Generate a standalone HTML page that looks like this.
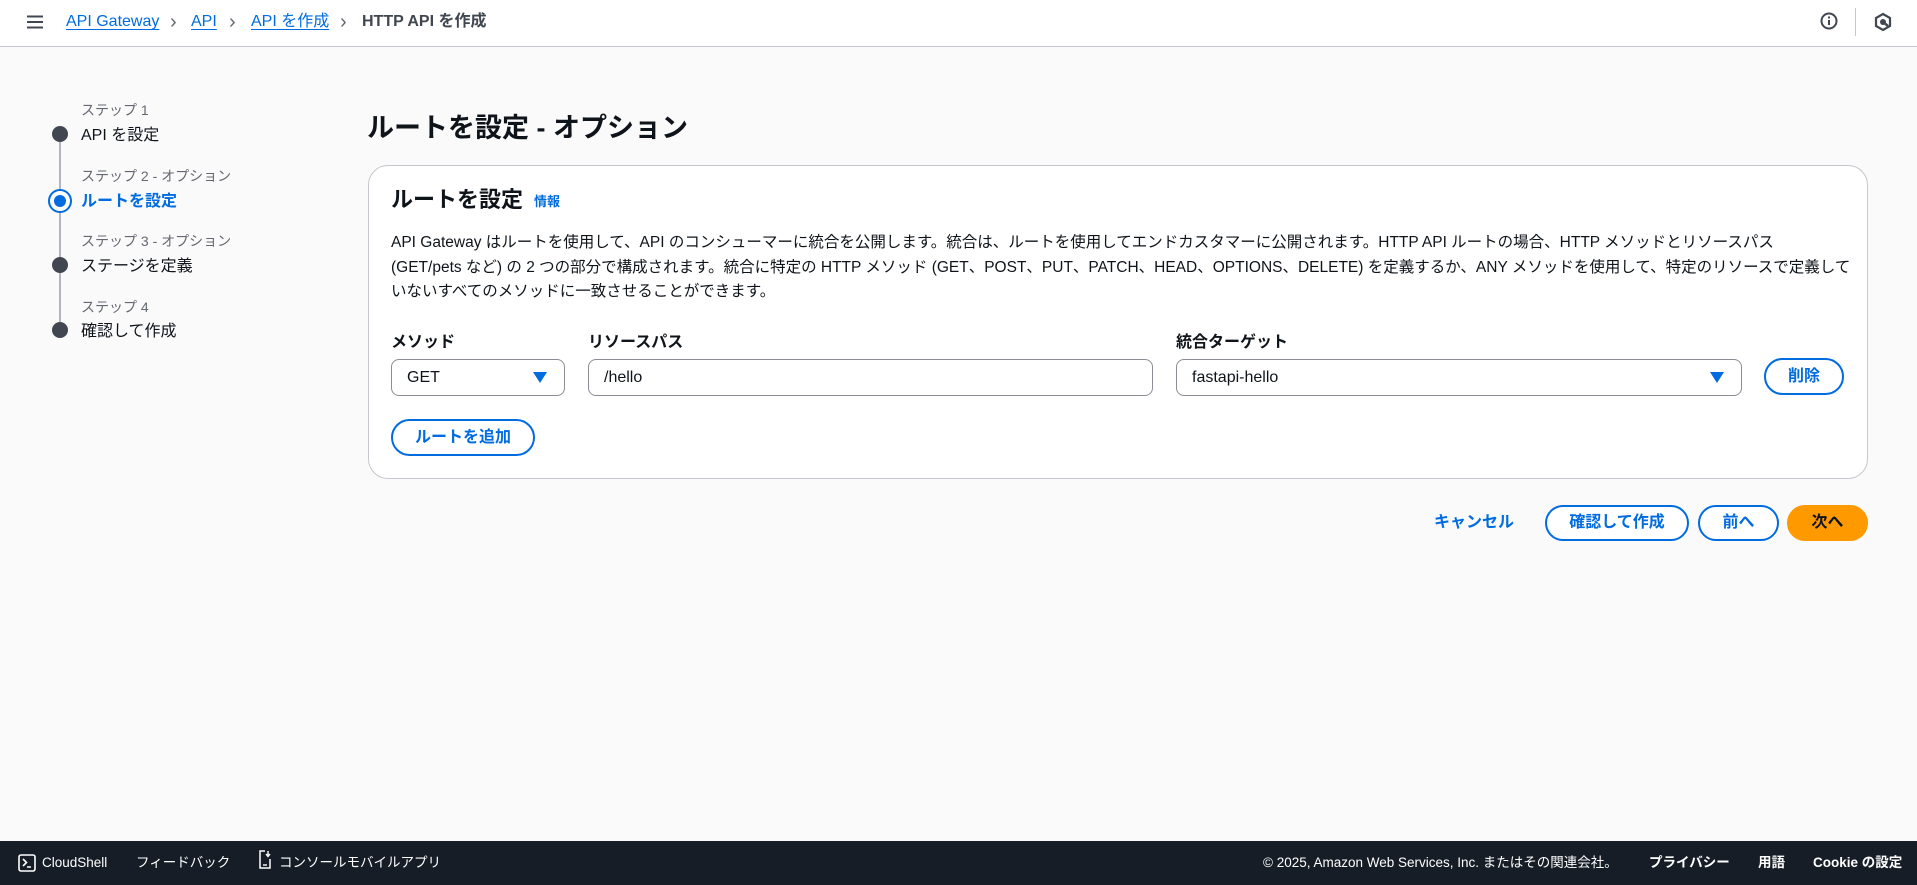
<!DOCTYPE html>
<html><head><meta charset="utf-8"><style>
*{box-sizing:border-box;margin:0;padding:0}
body{width:1917px;height:885px;background:#fafafa;font-family:"Liberation Sans","Noto Sans CJK JP",sans-serif;color:#0f141a;position:relative;overflow:hidden}
.abs{position:absolute;white-space:nowrap;line-height:20px}
.hdr{position:absolute;left:0;top:0;width:1917px;height:47px;background:#fff;border-bottom:1px solid #c6c6cd}
.bc{font-size:16px;top:12px}
.link{color:#006ce0;text-decoration:underline;text-underline-offset:3px}
.chev{color:#656871;top:12px;font-size:20px}
.small{font-size:14px;color:#656871}
.stp{font-size:16px;color:#0f141a}
.dot{position:absolute;width:16px;height:16px;border-radius:50%;background:#424650}
.vl{position:absolute;width:2px;background:#b4b4bb;left:59px}
.card{position:absolute;left:368px;top:165px;width:1500px;height:314px;background:#fff;border:1px solid #c6c6cd;border-radius:20px}
.lbl{font-size:16px;font-weight:bold}
.inp{position:absolute;height:37px;border:1px solid #8c8c94;border-radius:8px;background:#fff;font-size:16px;padding:0 15px;display:flex;align-items:center}
.btn{position:absolute;border:2px solid #006ce0;border-radius:20px;color:#006ce0;font-weight:bold;font-size:16px;background:#fff;display:flex;align-items:center;justify-content:center;line-height:1}
.tri{position:absolute;width:0;height:0;border-left:7px solid transparent;border-right:7px solid transparent;border-top:11px solid #006ce0}
.ft{position:absolute;left:0;top:841px;width:1917px;height:44px;background:#161d26}
.ftx{color:#fff;font-size:13.5px;top:853px}
</style></head><body>
<div class="hdr"></div>
<svg class="abs" style="left:27px;top:15px" width="16" height="14"><path d="M0 1.5H16M0 7H16M0 12.5H16" stroke="#414750" stroke-width="2"/></svg>
<span class="abs bc link" style="left:66px">API Gateway</span>
<span class="abs chev" style="left:170px">›</span>
<span class="abs bc link" style="left:191px">API</span>
<span class="abs chev" style="left:229px">›</span>
<span class="abs bc link" style="left:251px">API を作成</span>
<span class="abs chev" style="left:340px">›</span>
<span class="abs bc" style="left:362px;color:#414750;font-weight:bold">HTTP API を作成</span>
<svg class="abs" style="left:1820px;top:12px" width="18" height="18"><circle cx="9" cy="9" r="7.5" fill="none" stroke="#414750" stroke-width="2"/><path d="M9 8V13M9 4.5V6.5" stroke="#414750" stroke-width="2"/></svg>
<div class="abs" style="left:1855px;top:8px;width:1px;height:28px;background:#c6c6cd"></div>
<svg class="abs" style="left:1873px;top:12px" width="20" height="20"><path d="M10 2L17 6V14L10 18L3 14V6Z" fill="none" stroke="#414750" stroke-width="2.2"/><circle cx="10" cy="10" r="3" fill="#414750"/><path d="M10 10L15 14" stroke="#414750" stroke-width="2.5"/></svg>

<div class="vl" style="top:140px;height:54px"></div>
<div class="vl" style="top:212px;height:46px"></div>
<div class="vl" style="top:272px;height:50px"></div>
<span class="abs small" style="left:81px;top:100px">ステップ 1</span>
<div class="dot" style="left:52px;top:126px"></div>
<span class="abs stp" style="left:81px;top:126px">API を設定</span>
<span class="abs small" style="left:81px;top:166px">ステップ 2 - オプション</span>
<div class="abs" style="left:48px;top:189px;width:24px;height:24px;border-radius:50%;border:2.5px solid #006ce0;background:#fff"></div>
<div class="abs" style="left:54px;top:195px;width:12px;height:12px;border-radius:50%;background:#006ce0"></div>
<span class="abs stp" style="left:81px;top:192px;color:#006ce0;font-weight:bold">ルートを設定</span>
<span class="abs small" style="left:81px;top:231px">ステップ 3 - オプション</span>
<div class="dot" style="left:52px;top:257px"></div>
<span class="abs stp" style="left:81px;top:257px">ステージを定義</span>
<span class="abs small" style="left:81px;top:297px">ステップ 4</span>
<div class="dot" style="left:52px;top:322px"></div>
<span class="abs stp" style="left:81px;top:322px">確認して作成</span>

<span class="abs" style="left:367px;top:112px;font-size:27px;line-height:32px;font-weight:bold">ルートを設定 - オプション</span>

<div class="card"></div>
<span class="abs" style="left:391px;top:187px;font-size:22px;line-height:26px;font-weight:bold">ルートを設定</span>
<span class="abs" style="left:534px;top:192px;font-size:13px;font-weight:bold;color:#006ce0">情報</span>
<div class="abs" style="left:391px;top:231px;font-size:15.5px;line-height:24.5px;color:#0f141a">API Gateway はルートを使用して、API のコンシューマーに統合を公開します。統合は、ルートを使用してエンドカスタマーに公開されます。HTTP API ルートの場合、HTTP メソッドとリソースパス<br>(GET/pets など) の 2 つの部分で構成されます。統合に特定の HTTP メソッド (GET、POST、PUT、PATCH、HEAD、OPTIONS、DELETE) を定義するか、ANY メソッドを使用して、特定のリソースで定義して<br>いないすべてのメソッドに一致させることができます。</div>

<span class="abs lbl" style="left:391px;top:333px">メソッド</span>
<span class="abs lbl" style="left:588px;top:333px">リソースパス</span>
<span class="abs lbl" style="left:1176px;top:333px">統合ターゲット</span>
<div class="inp" style="left:391px;top:359px;width:174px">GET</div>
<div class="tri" style="left:533px;top:372px"></div>
<div class="inp" style="left:588px;top:359px;width:565px">/hello</div>
<div class="inp" style="left:1176px;top:359px;width:566px">fastapi-hello</div>
<div class="tri" style="left:1710px;top:372px"></div>
<div class="btn" style="left:1764px;top:358px;width:80px;height:37px">削除</div>
<div class="btn" style="left:391px;top:419px;width:144px;height:37px">ルートを追加</div>

<span class="abs" style="left:1434px;top:513px;font-size:16px;font-weight:bold;color:#006ce0">キャンセル</span>
<div class="btn" style="left:1545px;top:505px;width:144px;height:36px">確認して作成</div>
<div class="btn" style="left:1698px;top:505px;width:81px;height:36px">前へ</div>
<div class="btn" style="left:1787px;top:505px;width:81px;height:36px;background:#ff9900;border-color:#ff9900;color:#0f141a">次へ</div>

<div class="ft"></div>
<svg class="abs" style="left:18px;top:854px" width="18" height="18"><rect x="1" y="1" width="16" height="16" rx="2" fill="none" stroke="#fff" stroke-width="1.6"/><path d="M5 5L8.5 8.5L5 12M9 13H13" stroke="#fff" stroke-width="1.6" fill="none"/></svg>
<span class="abs ftx" style="left:42px">CloudShell</span>
<span class="abs ftx" style="left:136px">フィードバック</span>
<svg class="abs" style="left:258px;top:850px" width="14" height="20"><path d="M7 1H2V18H12V9" fill="none" stroke="#fff" stroke-width="1.5"/><path d="M10 1V6M8 4L10 6.5L12 4" fill="none" stroke="#fff" stroke-width="1.4"/><path d="M5 15H9" stroke="#fff" stroke-width="1.4"/></svg>
<span class="abs ftx" style="left:279px">コンソールモバイルアプリ</span>
<span class="abs ftx" style="left:1263px">© 2025, Amazon Web Services, Inc. またはその関連会社。</span>
<span class="abs ftx" style="left:1649px;font-weight:bold">プライバシー</span>
<span class="abs ftx" style="left:1758px;font-weight:bold">用語</span>
<span class="abs ftx" style="left:1813px;font-weight:bold">Cookie の設定</span>
</body></html>
